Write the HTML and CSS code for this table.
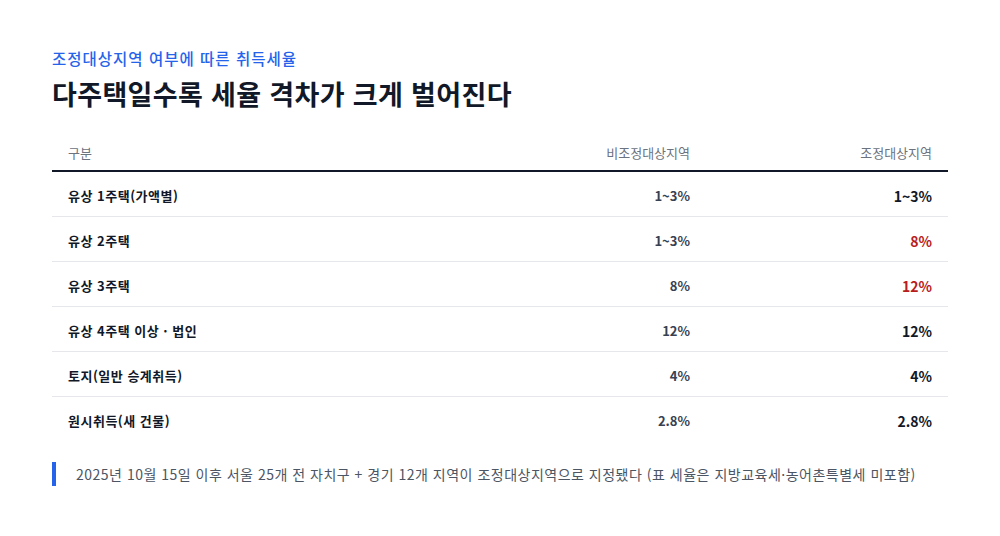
FILE: index.html
```html
<!DOCTYPE html>
<html lang="ko">
<head>
<meta charset="UTF-8">
<title>조정대상지역 취득세율</title>
<link rel="stylesheet" href="styles.css">
</head>
<body>
<div class="wrap">
    <p class="eyebrow">조정대상지역 여부에 따른 취득세율</p>
    <h1 class="title">다주택일수록 세율 격차가 크게 벌어진다</h1>

    <table class="rates">
        <thead>
            <tr>
                <th class="kind">구분</th>
                <th class="num">비조정대상지역</th>
                <th class="num last">조정대상지역</th>
            </tr>
        </thead>
        <tbody>
            <tr>
                <td class="kind">유상 1주택(가액별)</td>
                <td class="num">1~3%</td>
                <td class="num last">1~3%</td>
            </tr>
            <tr>
                <td class="kind">유상 2주택</td>
                <td class="num">1~3%</td>
                <td class="num last up">8%</td>
            </tr>
            <tr>
                <td class="kind">유상 3주택</td>
                <td class="num">8%</td>
                <td class="num last up">12%</td>
            </tr>
            <tr>
                <td class="kind">유상 4주택 이상 · 법인</td>
                <td class="num">12%</td>
                <td class="num last">12%</td>
            </tr>
            <tr>
                <td class="kind">토지(일반 승계취득)</td>
                <td class="num">4%</td>
                <td class="num last">4%</td>
            </tr>
            <tr>
                <td class="kind">원시취득(새 건물)</td>
                <td class="num">2.8%</td>
                <td class="num last">2.8%</td>
            </tr>
        </tbody>
    </table>

    <p class="note">2025년 10월 15일 이후 서울 25개 전 자치구 + 경기 12개 지역이 조정대상지역으로 지정됐다 (표 세율은 지방교육세·농어촌특별세 미포함)</p>
</div>
</body>
</html>
```

FILE: styles.css
```css
* {
    margin: 0;
    padding: 0;
    box-sizing: border-box;
}

body {
    background: #fff;
    font-family: "Noto Sans CJK KR", "Noto Sans", sans-serif;
    color: #111827;
}

.wrap {
    margin: 0 auto;
    padding-top: 46px;
    width: 896px;
}

.eyebrow {
    color: #2563eb;
    font-size: 15.5px;
    font-weight: 500;
    line-height: 24px;
    letter-spacing: 1px;
}

.title {
    margin-top: 6px;
    font-size: 27px;
    font-weight: 700;
    line-height: 36px;
    letter-spacing: 0.35px;
}

.rates {
    margin-top: 21px;
    width: 100%;
    border-collapse: collapse;
}

.rates th {
    padding: 8px 16px 5px;
    border-bottom: 2px solid #111827;
    color: #6b7280;
    font-size: 13px;
    font-weight: 400;
    line-height: 24px;
}

.rates td {
    padding: 12px 16px 8px;
    border-bottom: 1px solid #e5e7eb;
    font-size: 13px;
    font-weight: 700;
    line-height: 24px;
    letter-spacing: 0.5px;
}

.rates tbody tr:last-child td {
    border-bottom: none;
}

.rates .kind {
    text-align: left;
}

.rates .num {
    width: 242px;
    text-align: right;
}

.rates td.num {
    color: #374151;
    font-weight: 600;
    letter-spacing: 0;
}

.rates td.last {
    color: #111827;
    font-size: 14px;
    font-weight: 700;
}

.rates td.up {
    color: #b91c1c;
    font-weight: 600;
}

.note {
    margin-top: 21px;
    padding-left: 20px;
    border-left: 4px solid #2563eb;
    color: #4b5563;
    font-size: 14px;
    line-height: 24px;
    letter-spacing: 0.5px;
}
```
